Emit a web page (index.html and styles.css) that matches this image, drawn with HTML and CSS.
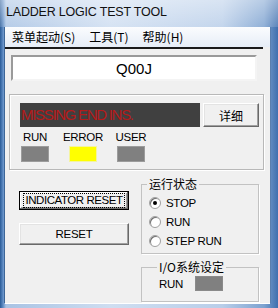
FILE: index.html
```html
<!DOCTYPE html>
<html>
<head>
<meta charset="utf-8">
<link rel="stylesheet" href="styles.css">
</head>
<body>
<div class="window">
  <div class="titlebar">LADDER LOGIC TEST TOOL</div>
  <div class="client">
    <div class="menubar">
      <span class="menu-item">菜单起动(S)</span>
      <span class="menu-item">工具(T)</span>
      <span class="menu-item">帮助(H)</span>
    </div>
    <div class="menu-line"></div>
    <div class="textbox">Q00J</div>
    <div class="frame">
      <div class="status-row">
        <div class="display">MISSING END INS.</div>
        <div class="btn detail-btn">详细</div>
      </div>
      <div class="indicators">
        <div class="indicator"><span class="ind-label">RUN</span><span class="lamp"></span></div>
        <div class="indicator"><span class="ind-label">ERROR</span><span class="lamp lamp-on"></span></div>
        <div class="indicator"><span class="ind-label">USER</span><span class="lamp"></span></div>
      </div>
    </div>
    <div class="bottom">
      <div class="left-col">
        <div class="btn btn-default"><span class="focus">INDICATOR RESET</span></div>
        <div class="btn btn-reset">RESET</div>
      </div>
      <div class="right-col">
        <fieldset class="group run-group">
          <legend>运行状态</legend>
          <div class="radio-row"><span class="radio checked"></span><span class="radio-label">STOP</span></div>
          <div class="radio-row"><span class="radio"></span><span class="radio-label">RUN</span></div>
          <div class="radio-row"><span class="radio"></span><span class="radio-label">STEP RUN</span></div>
        </fieldset>
        <fieldset class="group io-group">
          <legend>I/O系统设定</legend>
          <div class="io-row"><span class="io-label">RUN</span><span class="lamp io-lamp"></span></div>
        </fieldset>
      </div>
    </div>
  </div>
</div>
</body>
</html>
```
FILE: styles.css
```css
* { box-sizing: border-box; }
html, body { margin: 0; padding: 0; }
body { width: 278px; height: 308px; overflow: hidden; font-family: "Liberation Sans", Arial, sans-serif; }

.window {
  width: 278px; height: 308px;
  display: flex; flex-direction: column;
  background: linear-gradient(to right, #2a5b97 0px, #5f8cc4 3px, #a9c3e4 6px, #cfdef1 40%, #b9cee9 80%, #7da2d0 95%, #3f6fae 100%);
}
.titlebar {
  height: 27px;
  padding: 5px 0 0 6px;
  font-size: 12.5px;
  letter-spacing: -0.2px;
  color: #111;
  background: linear-gradient(to bottom, rgba(255,255,255,0.45), rgba(255,255,255,0.15));
}
.client {
  flex: 1;
  margin: 0 8px 5px 5px;
  background: #f0f0f0;
  display: flex; flex-direction: column;
  box-shadow: -1px 0 0 #3d6698, 1px 0 0 #5a7fae, 0 1px 0 #fff;
}
.menubar {
  height: 20px;
  display: flex; align-items: center;
  background: linear-gradient(to bottom, #fbfcfe, #e6edf7);
  font-family: "Noto Sans CJK SC", "Liberation Sans", sans-serif;
  font-size: 12px;
}
.menu-item { padding: 0 7px; line-height: 20px; }
.menu-line { height: 2px; width: 258px; background: #1a1a1a; }

.textbox {
  margin: 6px 0 0 6px;
  width: 246px; height: 26px;
  background: #fff;
  border: 2px solid; border-color: #9a9a9a #f4f4f4 #f4f4f4 #9a9a9a;
  display: flex; align-items: center; justify-content: center;
  font-size: 15px; color: #000;
}

.frame {
  margin: 13px 0 0 4px;
  width: 255px; height: 76px;
  border: 1px solid #b8b8b8;
  box-shadow: inset 1px 1px 0 #fff, 1px 1px 0 #fff;
}
.status-row { display: flex; gap: 3px; margin: 8px 0 0 10px; }
.display {
  width: 180px; height: 24px;
  background: #404040;
  color: #b51a1a;
  font-size: 15px; letter-spacing: -1.3px;
  line-height: 24px; padding-left: 1px;
}
.btn {
  display: flex; align-items: center; justify-content: center;
  background: #f0f0f0;
  border: 1px solid; border-color: #fff #696969 #696969 #fff;
  box-shadow: inset -1px -1px 0 #a0a0a0, inset 1px 1px 0 #e3e3e3;
  font-size: 11.5px; letter-spacing: -0.3px; color: #000;
}
.detail-btn {
  width: 56px; height: 24px;
  font-family: "Noto Sans CJK SC", sans-serif; font-size: 12px; letter-spacing: 0;
}
.indicators { display: flex; margin: 4px 0 0 1px; }
.indicator { width: 48px; display: flex; flex-direction: column; align-items: center; }
.ind-label { font-size: 11.5px; letter-spacing: -0.3px; line-height: 13px; height: 13px; }
.lamp { width: 28px; height: 16px; margin-top: 2px; background: #808080; border: 1px solid #9c9c9c; }
.lamp-on { background: #ffff00; border-color: #f4f4a0; }

.bottom { display: flex; }
.left-col { margin: 21px 0 0 14px; width: 110px; display: flex; flex-direction: column; }
.btn-default {
  height: 19px;
  border: 1px solid #000;
  box-shadow: inset -1px -1px 0 #696969, inset 1px 1px 0 #fff, inset -2px -2px 0 #a0a0a0;
}
.focus { outline: 1px dotted #000; outline-offset: 0; padding: 0 2px; line-height: 13px; letter-spacing: -0.45px; }
.btn-reset { height: 22px; margin-top: 13px; }

.right-col { margin: 7px 0 0 12px; width: 118px; display: flex; flex-direction: column; }
.group {
  margin: 0; min-width: 0;
  border: 1px solid #c2c2c2;
  box-shadow: 1px 1px 0 #fff;
  padding: 0 0 0 7px;
}
.group legend {
  padding: 0 2px; margin-left: -2px;
  font-family: "Noto Sans CJK SC", "Liberation Sans", sans-serif;
  font-size: 12px; line-height: 14px; height: 14px;
}
.run-group { height: 77px; padding-top: 2px; }
.radio-row { height: 19px; display: flex; align-items: center; }
.radio {
  width: 12px; height: 12px; border-radius: 50%;
  background: #fff;
  border: 1px solid #a0a0a0;
  box-shadow: inset 1px 1px 0 #707070;
  display: flex; align-items: center; justify-content: center;
}
.radio.checked::after { content: ""; width: 4px; height: 4px; border-radius: 50%; background: #000; }
.radio-label { margin-left: 5px; font-size: 11.5px; letter-spacing: -0.3px; }
.io-group { height: 42px; margin-top: 6px; padding-left: 17px; }
.io-row { display: flex; align-items: center; margin-top: 2px; height: 15px; }
.io-label { font-size: 11.5px; letter-spacing: -0.3px; width: 36px; }
.io-lamp { height: 15px; margin-top: 0; border-color: #8a8a8a; }
```
